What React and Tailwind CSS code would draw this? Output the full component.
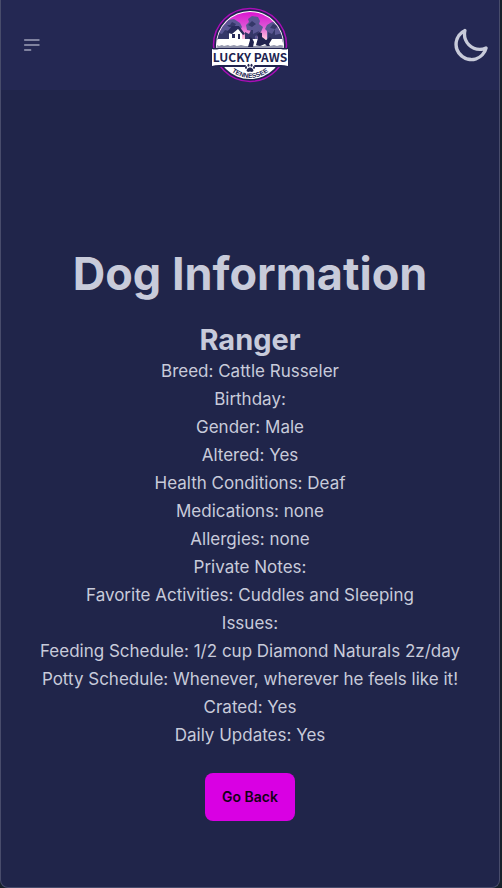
import React from "react";

const details = [
  ["Breed", "Cattle Russeler"],
  ["Birthday", ""],
  ["Gender", "Male"],
  ["Altered", "Yes"],
  ["Health Conditions", "Deaf"],
  ["Medications", "none"],
  ["Allergies", "none"],
  ["Private Notes", ""],
  ["Favorite Activities", "Cuddles and Sleeping"],
  ["Issues", ""],
  ["Feeding Schedule", "1/2 cup Diamond Naturals 2z/day"],
  ["Potty Schedule", "Whenever, wherever he feels like it!"],
  ["Crated", "Yes"],
  ["Daily Updates", "Yes"],
];

function MenuIcon() {
  return (
    <svg viewBox="0 0 24 24" className="size-5" fill="none" stroke="currentColor" strokeWidth="2" strokeLinecap="round" aria-hidden="true">
      <path d="M4.5 6h17M4.5 12h17M4.5 18h7" />
    </svg>
  );
}

function MoonIcon() {
  return (
    <svg viewBox="0 0 24 24" className="size-10" fill="currentColor" aria-hidden="true">
      <path d="M21.64,13a1,1,0,0,0-1.05-.14,8.05,8.05,0,0,1-3.37.73A8.15,8.15,0,0,1,9.08,5.49a8.59,8.59,0,0,1,.25-2A1,1,0,0,0,8,2.36,10.14,10.14,0,1,0,22,14.05,1,1,0,0,0,21.64,13Zm-9.5,6.69A8.14,8.14,0,0,1,7.08,5.22v.27A10.15,10.15,0,0,0,17.22,15.63a9.79,9.79,0,0,0,2.1-.22A8.11,8.11,0,0,1,12.14,19.73Z" />
    </svg>
  );
}

function Logo() {
  return (
    <svg viewBox="10 5 80 80" className="size-20" role="img" aria-label="Lucky Paws Tennessee">
      <defs>
        <linearGradient id="sky" x1="0" y1="0" x2="0" y2="1">
          <stop offset="0" stopColor="#d90fd0" />
          <stop offset="0.45" stopColor="#dc55d5" />
          <stop offset="0.8" stopColor="#ffc0dc" />
          <stop offset="1" stopColor="#ffe0df" />
        </linearGradient>
        <clipPath id="scene"><circle cx="50" cy="45" r="33" /></clipPath>
        <path id="arc" d="M27 68 Q50 88 73 68" />
      </defs>
      <circle cx="50" cy="45" r="36.5" fill="#20234f" stroke="#a80eb6" strokeWidth="1.5" />
      <circle cx="50" cy="45" r="34" fill="#fff" />
      <g clipPath="url(#scene)">
        <rect x="16" y="11" width="68" height="34" fill="url(#sky)" />
        <g fill="#5a5793">
          <path d="M15 40V30l5-4 5-2 3-4 6-1 6 4 2 4-2 3 1 10z" />
          <path d="M52 40V31l-5-1-1-5 3-3-1-3 4-3 6 1 2 4-1 3 4 3-2 5-4 1 1 7z" />
          <path d="M67 40v-9l-2-2 2-4 5-3 6 1 4 5 4 5v10z" />
        </g>
        <g fill="#343768">
          <path d="M16 40V32l6 2 3-4 4 1 1 9z" />
          <path d="M45 40v-8l4 2 2-4h2v4l6-3-1 4-3 1v5z" />
          <path d="M68 40v-8l4 2 3-5v6l8-2v9z" />
          <path d="M27 25h3l2-3 4 2-2 3h-5zM48 25l4-4 4 3-4 3zM70 28l3-4 5 2-3 3z" />
        </g>
        <path d="M15 39h70v12H15z" fill="#fff" />
        <path d="M29 31l6-5 7 5v8H29z" fill="#fff" />
        <path d="M27 32l5-6h7l6 8-2 1-5-6-6 5-4-1z" fill="#282b5b" />
        <path d="M32 34h3v4h-3zM38 34h2v5h-2z" fill="#282b5b" />
        <path d="M15 46l2-1 2 1 3-1 2 1 4-1 2 1 4-1 3 1 4-1 4 1h10l3-1 5 1 4-1 3 1 4-1 3 1 3-1 5 1v2H15z" fill="#9295ac" />
        <path d="M48 47l2-7-1-3 3 1 2 4-1 5zM56 45l2-7-1-3 2-3 3 1v4l4 3 4-3 2 2-3 5 1 2h-3l-2-2-5 2z" fill="#20234f" />
      </g>
      <path d="M11 48h78v18l-6 1H17l-6-1z" fill="#20234f" />
      <path d="M12 49q3 1 7 0h62q4 1 7 0v17q-4-1-7-1H19q-4 0-7 1z" fill="#fff" />
      <text x="50" y="62" textAnchor="middle" fill="#20234f" fontFamily='"Noto Sans CJK SC", sans-serif' fontWeight="700" fontSize="12">LUCKY PAWS</text>
      <circle cx="50" cy="68" r="5" fill="#fff" />
      <g fill="#20234f">
        <path d="M46.5 71q0.500-3.500 3.500-3.500t3.500 3.500l-1.500 1-2-.6-2 .6z" />
        <ellipse cx="46" cy="67.500" rx="1" ry="1.400" />
        <ellipse cx="48.500" cy="65.200" rx="1" ry="1.500" />
        <ellipse cx="51.500" cy="65.200" rx="1" ry="1.500" />
        <ellipse cx="54" cy="67.500" rx="1" ry="1.400" />
      </g>
      <text fill="#20234f" fontFamily='"Liberation Sans", sans-serif' fontWeight="700" fontSize="6.5" textAnchor="middle">
        <textPath href="#arc" startOffset="50%">TENNESSEE</textPath>
      </text>
    </svg>
  );
}

export default function App() {
  return (
    <div className="min-h-screen bg-[#17212b] pr-0.5 font-['Inter','Liberation_Sans',sans-serif] text-[#c8cbda]">
      <div className="flex min-h-screen flex-col overflow-hidden rounded-b-lg border-x border-b border-[#484c6b] bg-[#20254a]">
        <header className="grid h-[90px] grid-cols-3 items-center bg-[#242853] px-2">
          <button type="button" aria-label="Open menu" className="justify-self-start p-3 text-[#9da0b9]">
            <MenuIcon />
          </button>
          <a href="#" className="justify-self-center">
            <Logo />
          </a>
          <button type="button" aria-label="Toggle dark mode" className="justify-self-end">
            <MoonIcon />
          </button>
        </header>
        <main className="flex grow flex-col items-center px-4 pt-40 pb-12 text-center">
          <h1 className="text-[45px] leading-12 font-bold">Dog Information</h1>
          <div className="py-6">
            <h2 className="text-[29px] leading-[35px] font-bold">Ranger</h2>
            {details.map(([label, value]) => (
              <p key={label} className="text-[17px] leading-7">
                {label}: {value}
              </p>
            ))}
          </div>
          <button type="button" className="h-12 rounded-lg bg-[#d900e3] px-[17px] text-sm font-semibold text-[#140016]">
            Go Back
          </button>
        </main>
      </div>
    </div>
  );
}
